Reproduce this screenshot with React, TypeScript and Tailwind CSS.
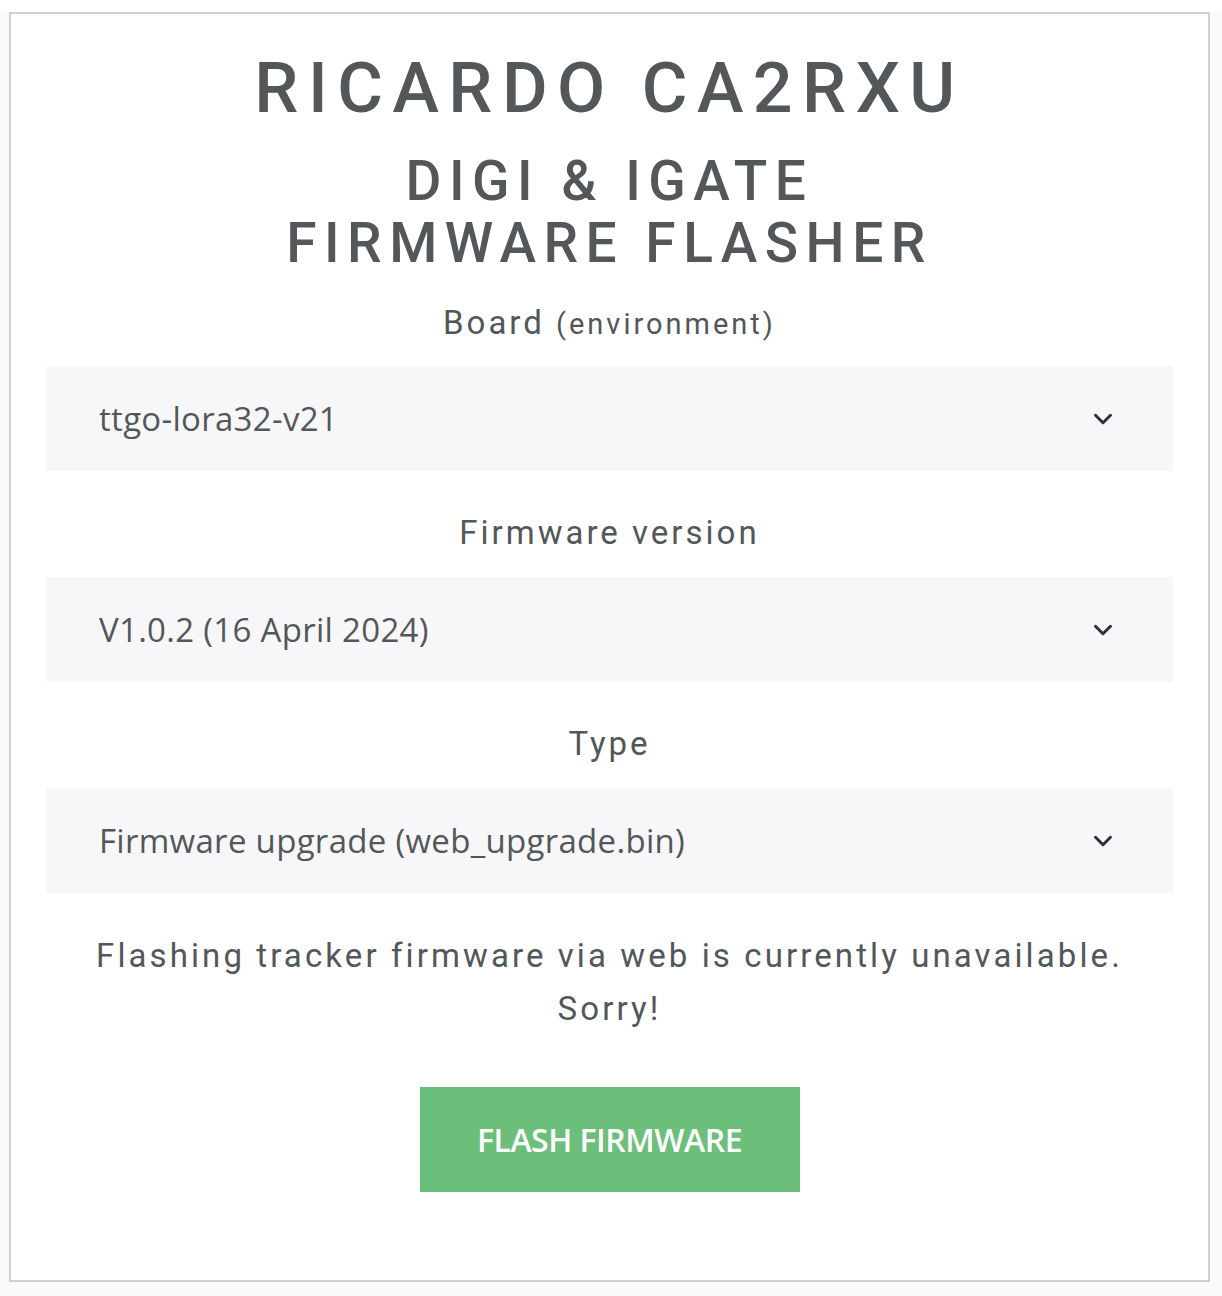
import { ChevronDown } from 'lucide-react'

const din = { fontFamily: 'Roboto, "Liberation Sans", sans-serif' }
const rounded = { fontFamily: '"Open Sans", Lato, sans-serif' }

function Select({ value }: { value: string }) {
	return (
		<div className="flex h-[105px] items-center justify-between bg-[#f7f7f9] pl-[53px] pr-[55px]">
			<span className="text-[33px] tracking-[0.3px] text-[#53575a]" style={rounded}>
				{value}
			</span>
			<ChevronDown className="h-[30px] w-[30px] text-[#2e3033]" strokeWidth={2.4} />
		</div>
	)
}

function Label({ children }: { children: React.ReactNode }) {
	return (
		<div
			className="text-center text-[33px] leading-[40px] tracking-[3px] text-[#53575a]"
			style={din}
		>
			{children}
		</div>
	)
}

export default function App() {
	return (
		<div className="min-h-[1296px] bg-[#fafafa]">
			<div className="ml-[9px] mr-[12px] mt-[12px] border-2 border-[#d0d0d0] bg-white px-[35px] pb-[88px]">
				<div style={din} className="text-center font-medium text-[#53575a]">
					<h1 className="pt-[32px] text-[70px] leading-[84px] tracking-[9.5px]">RICARDO CA2RXU</h1>
					<h2 className="mt-[20px] text-[55px] leading-[62px] tracking-[7.5px]">
						DIGI &amp; IGATE
						<br />
						FIRMWARE FLASHER
					</h2>
				</div>

				<div className="mt-[29px]">
					<Label>
						Board <span className="text-[29px]">(environment)</span>
					</Label>
				</div>
				<div className="mt-[22px]">
					<Select value="ttgo-lora32-v21" />
				</div>

				<div className="mt-[42px]">
					<Label>Firmware version</Label>
				</div>
				<div className="mt-[24px]">
					<Select value="V1.0.2 (16 April 2024)" />
				</div>

				<div className="mt-[42px]">
					<Label>Type</Label>
				</div>
				<div className="mt-[24px]">
					<Select value="Firmware upgrade (web_upgrade.bin)" />
				</div>

				<p
					className="mt-[36px] text-center text-[33px] leading-[53px] tracking-[3.1px] text-[#53575a]"
					style={din}
				>
					Flashing tracker firmware via web is currently unavailable.
					<br />
					Sorry!
				</p>

				<div className="mt-[52px] flex justify-center">
					<button
						className="h-[105px] w-[380px] bg-[#6cbe7b] text-[32px] font-semibold tracking-[-0.5px] text-white"
						style={rounded}
					>
						FLASH FIRMWARE
					</button>
				</div>
			</div>
		</div>
	)
}
